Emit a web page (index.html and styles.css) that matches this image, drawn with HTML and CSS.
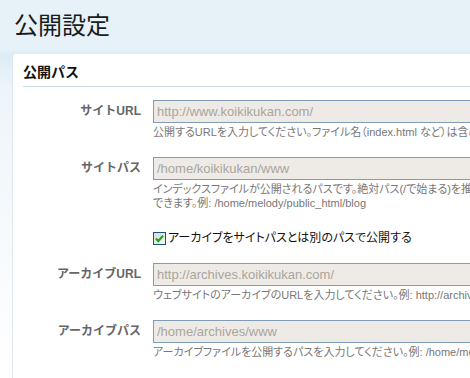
FILE: index.html
```html
<!DOCTYPE html>
<html lang="ja">
<head>
    <meta charset="UTF-8">
    <title>公開設定</title>
    <link rel="stylesheet" href="styles.css">
</head>
<body>

    <div class="header">
        <h1>公開設定</h1>
    </div>

    <div class="panel">
        <h2>公開パス</h2>

        <div class="fields">
            <div class="field">
                <label class="field-label">サイトURL</label>
                <div class="field-body">
                    <div class="input">http://www.koikikukan.com/</div>
                    <p class="hint">公開するURLを入力してください。ファイル名（index.html など）は含めないでください。</p>
                </div>
            </div>

            <div class="field">
                <label class="field-label">サイトパス</label>
                <div class="field-body">
                    <div class="input">/home/koikikukan/www</div>
                    <p class="hint">インデックスファイルが公開されるパスです。絶対パス(/で始まる)を推奨しますが、<br>できます。例: /home/melody/public_html/blog</p>
                </div>
            </div>

            <div class="field check-row">
                <span class="field-label"></span>
                <div class="field-body">
                    <span class="checkbox">
                        <svg width="11" height="11" viewBox="0 0 11 11"><path d="M2 5.5 L4.3 8 L9 2.8" fill="none" stroke="#22a322" stroke-width="2.2"/></svg>
                    </span>
                    <span class="check-text">アーカイブをサイトパスとは別のパスで公開する</span>
                </div>
            </div>

            <div class="field">
                <label class="field-label">アーカイブURL</label>
                <div class="field-body">
                    <div class="input">http://archives.koikikukan.com/</div>
                    <p class="hint">ウェブサイトのアーカイブのURLを入力してください。例: http://archives.example.com/</p>
                </div>
            </div>

            <div class="field">
                <label class="field-label">アーカイブパス</label>
                <div class="field-body">
                    <div class="input">/home/archives/www</div>
                    <p class="hint">アーカイブファイルを公開するパスを入力してください。例: /home/melody/public_html/archives</p>
                </div>
            </div>
        </div>
    </div>

</body>
</html>
```

FILE: styles.css
```css
html, body {
    margin: 0;
    padding: 0;
    width: 470px;
    height: 378px;
    overflow: hidden;
}
body {
    font-family: "Liberation Sans", "Noto Sans CJK JP", sans-serif;
    background: linear-gradient(#e6f1f8 0, #e6f1f8 50px, #dcebf6 54px, #eef5fa 90px, #ffffff 378px);
    color: #222;
}
.header {
    height: 54px;
    padding-left: 14px;
    box-sizing: border-box;
}
.header h1 {
    margin: 0;
    padding-top: 12px;
    font-size: 24px;
    line-height: 28px;
    font-weight: normal;
    color: #1a1a1a;
}
.panel {
    margin-left: 12px;
    height: 324px;
    background: #fff;
    border-left: 1px solid #dce9f3;
    border-radius: 4px 0 0 0;
    padding: 8px 0 0 10px;
    box-sizing: border-box;
}
.panel h2 {
    margin: 0;
    font-size: 14px;
    line-height: 20px;
    font-weight: bold;
    color: #111;
    padding-bottom: 4px;
    border-bottom: 1px solid #c8dce6;
}
.fields {
    margin-top: 13px;
}
.field {
    display: flex;
    align-items: flex-start;
    margin-bottom: 18px;
}
.check-row {
    margin-bottom: 15px;
}
.field-label {
    flex: 0 0 118px;
    text-align: right;
    font-size: 12px;
    line-height: 23px;
    font-weight: bold;
    color: #666;
    margin-right: 12px;
}
.field-body {
    flex: 0 0 auto;
    width: 420px;
}
.input {
    height: 23px;
    box-sizing: border-box;
    border: 1px solid #7f9db9;
    background: #eeebe6;
    color: #aaa59d;
    font-size: 13px;
    line-height: 21px;
    padding-left: 3px;
    white-space: nowrap;
}
.hint {
    margin: 2px 0 0;
    font-size: 11px;
    line-height: 14px;
    color: #777;
    white-space: nowrap;
    font-feature-settings: "palt";
}
.check-row .field-body {
    display: flex;
    align-items: center;
    height: 20px;
}
.checkbox {
    width: 13px;
    height: 13px;
    box-sizing: border-box;
    border: 1px solid #1c5180;
    background: linear-gradient(135deg, #dcdcd6, #f6f6f3);
    display: flex;
    align-items: center;
    justify-content: center;
    margin-right: 2px;
}
.check-text {
    font-size: 12px;
    line-height: 20px;
    color: #111;
    font-feature-settings: "palt";
}
```
